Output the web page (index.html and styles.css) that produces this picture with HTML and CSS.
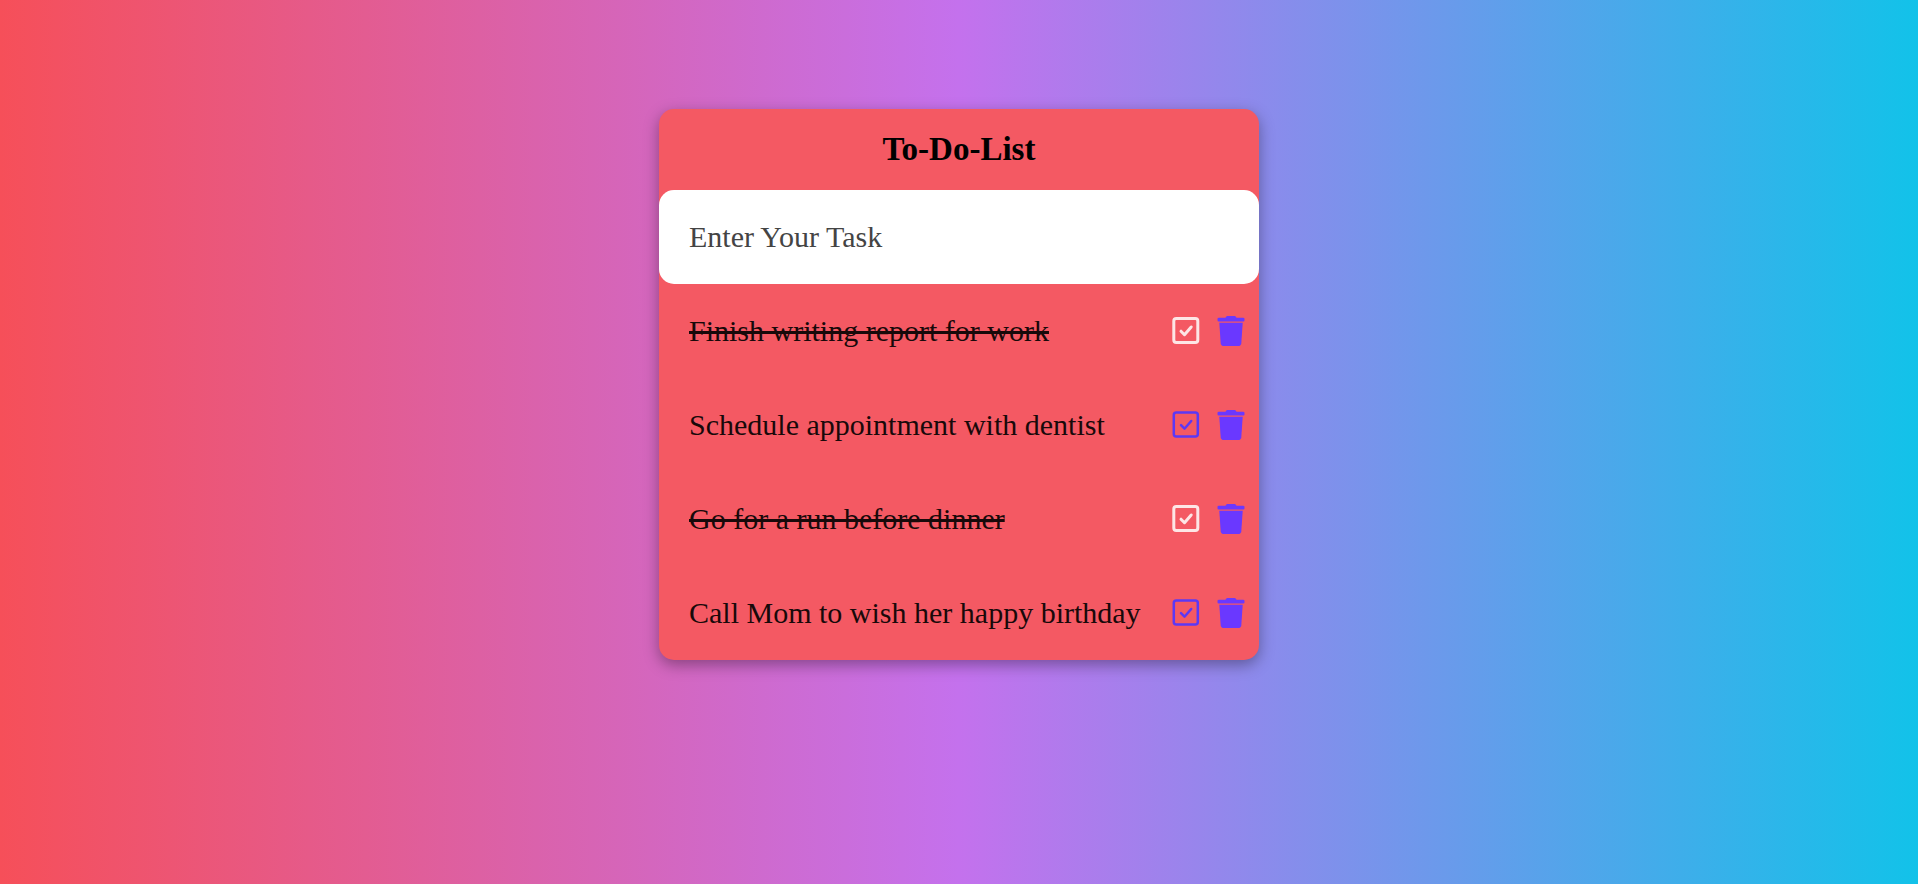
FILE: index.html
```html
<!DOCTYPE html>
<html lang="en">
<head>
<meta charset="utf-8">
<meta name="viewport" content="width=device-width, initial-scale=1">
<title>To-Do-List</title>
<link rel="stylesheet" href="styles.css">
</head>
<body>
<svg class="sprite" aria-hidden="true">
  <symbol id="check" viewBox="0 0 32 32">
    <rect x="2.800" y="3.500" width="24" height="24" rx="2.500"/>
    <path d="M10 16.200l3.500 3.500L20.200 12"/>
  </symbol>
  <symbol id="trash" viewBox="0 0 32 32">
    <path d="M3.800 2.800H10.500C11 1.500 11.600 1 13 1H19C20.400 1 21 1.500 21.500 2.800H28.200Q29.500 2.800 29.500 4V5.200Q29.500 6.400 28.200 6.400H3.800Q2.500 6.400 2.500 5.200V4Q2.500 2.800 3.800 2.800Z"/>
    <path d="M4.300 7.800H27.700L26.300 28.200Q26 31 23.200 31H8.800Q6 31 5.700 28.200Z"/>
  </symbol>
</svg>
<main class="todo">
  <h1 class="todo-title">To-Do-List</h1>
  <form class="todo-form">
    <input class="todo-input" type="text" placeholder="Enter Your Task" aria-label="Enter Your Task">
  </form>
  <ul class="todo-list">
    <li class="task">
      <label class="task-text" for="task-1">Finish writing report for work</label>
      <span class="task-check"><input id="task-1" type="checkbox" checked><svg class="icon"><use href="#check"/></svg></span>
      <button class="task-delete" type="button" aria-label="Delete task"><svg class="icon"><use href="#trash"/></svg></button>
    </li>
    <li class="task">
      <label class="task-text" for="task-2">Schedule appointment with dentist</label>
      <span class="task-check"><input id="task-2" type="checkbox"><svg class="icon"><use href="#check"/></svg></span>
      <button class="task-delete" type="button" aria-label="Delete task"><svg class="icon"><use href="#trash"/></svg></button>
    </li>
    <li class="task">
      <label class="task-text" for="task-3">Go for a run before dinner</label>
      <span class="task-check"><input id="task-3" type="checkbox" checked><svg class="icon"><use href="#check"/></svg></span>
      <button class="task-delete" type="button" aria-label="Delete task"><svg class="icon"><use href="#trash"/></svg></button>
    </li>
    <li class="task">
      <label class="task-text" for="task-4">Call Mom to wish her happy birthday</label>
      <span class="task-check"><input id="task-4" type="checkbox"><svg class="icon"><use href="#check"/></svg></span>
      <button class="task-delete" type="button" aria-label="Delete task"><svg class="icon"><use href="#trash"/></svg></button>
    </li>
  </ul>
</main>
</body>
</html>
```

FILE: styles.css
```css
* {
  box-sizing: border-box;
  margin: 0;
  padding: 0;
}

body {
  min-height: 100vh;
  padding-top: 109px;
  font-family: "Liberation Serif", "Times New Roman", serif;
  background: linear-gradient(to left, #12c2e9, #c471ed, #f64f59);
}

.sprite {
  position: absolute;
  width: 0;
  height: 0;
}

.todo {
  max-width: 600px;
  margin: 0 auto;
  border-radius: 15px;
  background: #f45963;
  box-shadow: 0 5px 15px rgba(0, 0, 0, 0.35);
}

.todo-title {
  padding: 22px;
  font-size: 33px;
  line-height: 37px;
  text-align: center;
  color: #000;
}

.todo-input {
  display: block;
  width: 100%;
  padding: 30px;
  border: 0;
  border-radius: 15px;
  outline: 0;
  background: #fff;
  font: 30px/34px "Liberation Serif", "Times New Roman", serif;
  color: #111;
}

.todo-input::placeholder {
  color: #444;
  opacity: 1;
}

.todo-list {
  list-style: none;
}

.task {
  display: flex;
  align-items: center;
  padding: 30px 12px 30px 30px;
  font-size: 30px;
  line-height: 34px;
  color: #18090a;
}

.task-text {
  flex: 1;
}

.task:has(:checked) .task-text {
  text-decoration: line-through;
  text-decoration-thickness: 3px;
}

.icon {
  display: block;
  width: 32px;
  height: 32px;
  fill: currentColor;
}

.task-check {
  position: relative;
  margin-right: 12px;
  color: #5c38f5;
}

.task-check input {
  position: absolute;
  inset: 0;
  width: 100%;
  height: 100%;
  opacity: 0;
  cursor: pointer;
}

.task-check .icon {
  fill: none;
  stroke: currentColor;
  stroke-width: 2.5;
  stroke-linecap: round;
  stroke-linejoin: round;
}

.task-check:has(:checked) {
  color: #fde6e6;
}

.task-check:has(:checked) .icon {
  stroke-width: 3;
}

.task-delete {
  border: 0;
  background: none;
  color: #6a38ff;
  cursor: pointer;
}
```
